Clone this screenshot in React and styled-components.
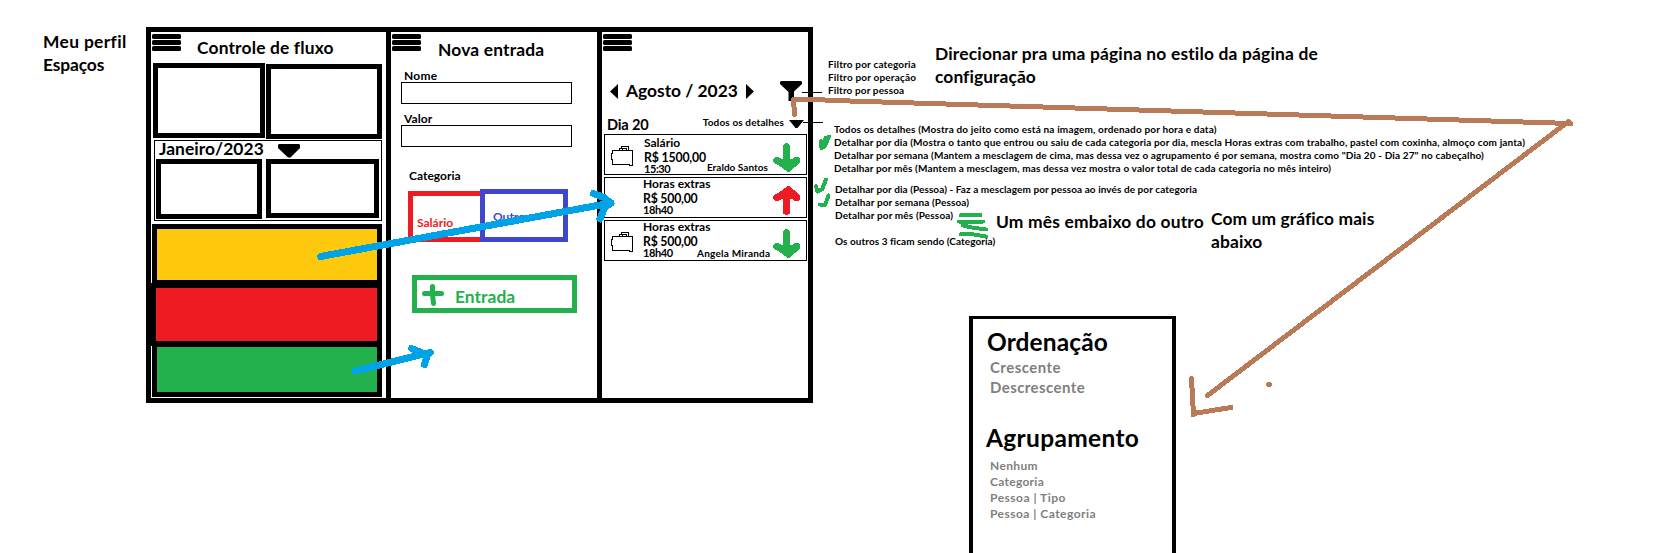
import React from "react";
import styled, { createGlobalStyle } from "styled-components";

const GlobalStyle = createGlobalStyle`
  * { box-sizing: border-box; }
  body {
    margin: 0;
    background: #fff;
    color: #000;
    font-family: Lato, "Liberation Sans", sans-serif;
    font-weight: 700;
  }
`;

const Board = styled.main`
  position: relative;
  width: 1672px;
  height: 553px;
  padding: 27px 0 0 146px;
  overflow: hidden;
`;

/* ---- text ---- */

const sizes = {
  title: { font: 17.4, line: 21 },
  day: { font: 14.6, line: 17 },
  field: { font: 12, line: 15 },
  amount: { font: 12.3, line: 13 },
  time: { font: 11, line: 13 },
  small: { font: 10, line: 12 },
};

const Label = styled.span`
  display: block;
  flex: none;
  white-space: pre;
  color: ${(p) => p.$color || "inherit"};
  font-size: ${(p) => sizes[p.$size].font}px;
  line-height: ${(p) => sizes[p.$size].line}px;
  letter-spacing: ${(p) => p.$track || 0}px;
`;

/* ---- phone frames ---- */

const Frames = styled.section`
  display: flex;
  width: 667px;
  height: 376px;
  border: 5px solid #000;
`;

const Panel = styled.section`
  display: flex;
  flex-direction: column;
  flex: none;
  width: ${(p) => p.$width}px;
  & + & {
    border-left: 5px solid #000;
  }
`;

const PanelHeader = styled.header`
  display: flex;
  align-items: flex-start;
  gap: ${(p) => p.$gap || 0}px;
  height: ${(p) => p.$height}px;
  padding: 2px 0 0 1px;
`;

const PanelTitle = styled(Label)`
  margin-top: ${(p) => p.$drop}px;
`;

const MenuLines = styled.div`
  display: flex;
  flex-direction: column;
  gap: 1px;
  width: 29px;
`;

const MenuLine = styled.i`
  height: 5px;
  border-radius: 1.5px;
  background: #000;
`;

/* ---- cash flow panel ---- */

const BoxRow = styled.div`
  display: flex;
  align-items: flex-start;
  gap: ${(p) => p.$gap}px;
  padding-left: ${(p) => p.$inset}px;
`;

const Box = styled.div`
  width: ${(p) => p.$width}px;
  height: ${(p) => p.$height}px;
  margin-top: ${(p) => p.$drop || 0}px;
  border: 5px solid #000;
`;

const MonthGroup = styled.div`
  width: 228px;
  height: 81px;
  margin: 1px 0 0 3px;
  border: 1px solid #000;
`;

const MonthPicker = styled.div`
  display: flex;
  align-items: flex-start;
  gap: 14px;
  height: 18px;
  padding-left: 4px;
  ${Label} {
    margin-top: -3px;
  }
  svg {
    margin-top: 3px;
  }
`;

const Bars = styled.div`
  display: flex;
  flex-direction: column;
  align-items: flex-end;
  width: 231px;
  margin-top: 3px;
`;

const Bar = styled.div`
  width: ${(p) => p.$width}px;
  height: ${(p) => p.$height}px;
  border: 5px solid #000;
  border-top-width: ${(p) => p.$top}px;
  border-bottom-width: ${(p) => p.$bottom}px;
  background: ${(p) => p.$fill};
`;

/* ---- new entry panel ---- */

const Field = styled.div`
  margin: 0 0 7px 10px;
  ${Label} {
    margin: 0 0 -1px 3px;
  }
`;

const FieldInput = styled.div`
  width: 171px;
  height: 22px;
  border: 1px solid #000;
`;

const CategoryLabel = styled(Label)`
  margin: 14px 0 6px 18px;
`;

const Categories = styled.div`
  display: flex;
  align-items: flex-end;
  padding-left: 17px;
`;

const Category = styled.div`
  width: ${(p) => p.$width}px;
  height: ${(p) => p.$height}px;
  padding: ${(p) => p.$pad};
  border: 5px solid ${(p) => p.$color};
  ${(p) => p.$open && "border-right: 0;"}
`;

const EntryButton = styled.div`
  display: flex;
  align-items: flex-start;
  gap: 11px;
  width: 165px;
  height: 38px;
  margin: 33px 0 0 21px;
  padding: 4px 5px;
  border: 5px solid #22b14c;
  ${Label} {
    margin-top: 2px;
  }
`;

/* ---- statement panel ---- */

const MonthNav = styled.div`
  display: flex;
  align-items: flex-start;
  height: 21px;
  padding-left: 8px;
`;

const Arrow = styled.svg`
  flex: none;
  margin: 4px ${(p) => p.$gap || 0}px 0 8px;
  &:first-child {
    margin-left: 0;
  }
`;

const Funnel = styled.svg`
  margin: 1px 0 0 26px;
`;

const DayRow = styled.div`
  display: flex;
  align-items: flex-start;
  width: 202px;
  height: 33px;
  padding: 15px 0 0 5px;
  svg {
    margin: 4px 0 0 5px;
  }
`;

const DetailLabel = styled(Label)`
  margin-left: auto;
`;

const Cards = styled.div`
  display: flex;
  flex-direction: column;
  gap: 2px;
  padding-left: 2px;
`;

const Card = styled.article`
  display: flex;
  align-items: flex-start;
  width: 203px;
  height: 41px;
  border: 1px solid #000;
`;

const CardIcon = styled.div`
  flex: none;
  width: ${(p) => p.$width}px;
  padding: 11px 0 0 6px;
`;

const CardLines = styled.div`
  flex: none;
  width: 54px;
  margin-top: ${(p) => p.$shift}px;
`;

const Amount = styled(Label)`
  margin: 1px 0 -2px;
`;

const Person = styled(Label)`
  margin: 26px ${(p) => p.$gap}px 0 auto;
`;

const Direction = styled.svg`
  flex: none;
  margin: ${(p) => p.$drop}px 5px 0 0;
  &:nth-child(3) {
    margin-left: auto;
  }
`;

/* ---- free notes on the board ---- */

const Note = styled.div`
  position: absolute;
  left: ${(p) => p.$x}px;
  top: ${(p) => p.$y}px;
  ${Label} {
    line-height: ${(p) => p.$line}px;
  }
`;

const OptionsSheet = styled.section`
  position: absolute;
  left: 969px;
  top: 316px;
  width: 207px;
  height: 300px;
  padding: 8px 0 0 13px;
  border: 4px solid #000;
  border-top-width: 3px;
`;

const SheetHeading = styled.h2`
  margin: ${(p) => p.$top || 0}px 0 0 ${(p) => p.$indent || 0}px;
  font-size: 24.5px;
  line-height: 29px;
  letter-spacing: ${(p) => p.$track}px;
`;

const OptionList = styled.ul`
  margin: ${(p) => p.$top}px 0 0;
  padding: 0 0 0 4px;
  list-style: none;
  color: #7f7f7f;
  font-size: ${(p) => p.$font}px;
  line-height: ${(p) => p.$line}px;
`;

const Option = styled.li`
  letter-spacing: ${(p) => p.$track}px;
`;

const Strokes = styled.svg`
  position: absolute;
  left: 0;
  top: 0;
  pointer-events: none;
`;

const Hamburger = () => (
  <MenuLines>
    <MenuLine />
    <MenuLine />
    <MenuLine />
  </MenuLines>
);

const Suitcase = () => (
  <svg width="24" height="21" viewBox="0 0 24 21" fill="none" stroke="#000" shapeRendering="crispEdges" display="block">
    <path d="M1.5 4.5H21.5V19.5H18.5V18.5H1.5V13.5H.5V7.5H1.5Z" />
    <path d="M8.5 4.5V2.5H10.5V.5H17.5V4.5M11.5 4.5V2.5H15.5V4.5" />
  </svg>
);

const FlowArrow = ({ up }) => (
  <Direction $drop={up ? 7 : 8} width="28" height="30" viewBox="0 0 28 30" shapeRendering="crispEdges">
    <g
      transform={up ? "matrix(1 0 0 -1 0 30)" : undefined}
      fill="none"
      stroke={up ? "#ed1c24" : "#22b14c"}
      strokeWidth="7.5"
      strokeLinecap="round"
      strokeLinejoin="round"
    >
      <path d="M13.5 4V23M4 17.5L10 20.5L15.5 25L23.5 17.5M9 20H19" />
    </g>
  </Direction>
);

const entries = [
  { name: "Salário", amount: "R$ 1500,00", amountTrack: -0.17, time: "15:30", person: "Eraldo Santos", personTrack: 0.04, personGap: 5, shift: 0, icon: true, indent: 39 },
  { name: "Horas extras", amount: "R$ 500,00", amountTrack: -0.23, time: "18h40", shift: -2, indent: 38, up: true },
  { name: "Horas extras", amount: "R$ 500,00", amountTrack: -0.23, time: "18h40", person: "Angela Miranda", personTrack: 0.22, personGap: 3, shift: -2, icon: true, indent: 38 },
];

export default function App() {
  return (
    <>
      <GlobalStyle />
      <Board>
        <Frames>
          <Panel $width={235}>
            <PanelHeader $height={31} $gap={16}>
              <Hamburger />
              <PanelTitle $size="title" $track={0.16} $drop={3}>Controle de fluxo</PanelTitle>
            </PanelHeader>
            <BoxRow $inset={2} $gap={1}>
              <Box $width={112} $height={75} />
              <Box $width={116} $height={75} $drop={1} />
            </BoxRow>
            <MonthGroup>
              <MonthPicker>
                <Label $size="title" $track={0.05}>Janeiro/2023</Label>
                <svg width="22" height="14" viewBox="0 0 22 14">
                  <path d="M1 0H21L22 1V4L12.5 13.5H10L0 4V1Z" />
                </svg>
              </MonthPicker>
              <BoxRow $inset={1} $gap={4}>
                <Box $width={106} $height={60} />
                <Box $width={113} $height={59} />
              </BoxRow>
            </MonthGroup>
            <Bars>
              <Bar $width={230} $height={59} $top={5} $bottom={3} $fill="#ffc90e" />
              <Bar $width={231} $height={63} $top={5} $bottom={5} $fill="#ed1c24" />
              <Bar $width={230} $height={51} $top={1} $bottom={5} $fill="#22b14c" />
            </Bars>
          </Panel>

          <Panel $width={211}>
            <PanelHeader $height={36} $gap={17}>
              <Hamburger />
              <PanelTitle $size="title" $track={0.18} $drop={5}>Nova entrada</PanelTitle>
            </PanelHeader>
            <Field>
              <Label $size="field" $track={0.27}>Nome</Label>
              <FieldInput />
            </Field>
            <Field>
              <Label $size="field" $track={0.12}>Valor</Label>
              <FieldInput />
            </Field>
            <CategoryLabel $size="field" $track={0.02}>Categoria</CategoryLabel>
            <Categories>
              <Category $width={72} $height={51} $pad="19px 0 0 4px" $color="#ed1c24" $open>
                <Label $size="field" $color="#ed1c24">Salário</Label>
              </Category>
              <Category $width={88} $height={53} $pad="15px 0 0 8px" $color="#3f48cc">
                <Label $size="field" $color="#3f48cc">Outros</Label>
              </Category>
            </Categories>
            <EntryButton>
              <svg width="22" height="22" viewBox="0 0 22 22" fill="none" stroke="#22b14c" strokeWidth="5" strokeLinecap="round">
                <path d="M10.5 2.5V10L11.500 19.5M2.5 9.5H19.5" />
              </svg>
              <Label $size="title" $color="#22b14c" $track={0.05}>Entrada</Label>
            </EntryButton>
          </Panel>

          <Panel $width={211}>
            <PanelHeader $height={48}>
              <Hamburger />
            </PanelHeader>
            <MonthNav>
              <Arrow $gap={8} width="8" height="15" viewBox="0 0 8 15">
                <path d="M8 0V15L0 7.5Z" />
              </Arrow>
              <Label $size="title" $track={-0.02}>Agosto / 2023</Label>
              <Arrow width="8" height="15" viewBox="0 0 8 15">
                <path d="M0 0V15L8 7.5Z" />
              </Arrow>
              <Funnel width="22" height="20" viewBox="0 0 22 20">
                <path d="M1 0H21L22 1V3L14 10.5V20H8.5V11L0 3V1Z" />
              </Funnel>
            </MonthNav>
            <DayRow>
              <Label $size="day" $track={-0.17}>Dia 20</Label>
              <DetailLabel $size="small" $track={0.13}>Todos os detalhes</DetailLabel>
              <svg width="15" height="9" viewBox="0 0 15 9">
                <path d="M0 0H15L8.5 8H6.5Z" />
              </svg>
            </DayRow>
            <Cards>
              {entries.map((entry, i) => (
                <Card key={i}>
                  <CardIcon $width={entry.indent}>{entry.icon && <Suitcase />}</CardIcon>
                  <CardLines $shift={entry.shift}>
                    <Label $size="field">{entry.name}</Label>
                    <Amount $size="amount" $track={entry.amountTrack}>{entry.amount}</Amount>
                    <Label $size="time" $track={-0.42}>{entry.time}</Label>
                  </CardLines>
                  {entry.person && (
                    <Person $size="small" $gap={entry.personGap} $track={entry.personTrack}>
                      {entry.person}
                    </Person>
                  )}
                  <FlowArrow up={entry.up} />
                </Card>
              ))}
            </Cards>
          </Panel>
        </Frames>

        <Note $x={43} $y={30} $line={23}>
          <Label $size="title" $track={0.35}>Meu perfil</Label>
          <Label $size="title" $track={-0.12}>Espaços</Label>
        </Note>

        <Note $x={828} $y={58} $line={13}>
          <Label $size="small" $track={0.17}>Filtro por categoria</Label>
          <Label $size="small" $track={0.18}>Filtro por operação</Label>
          <Label $size="small" $track={0.12}>Filtro por pessoa</Label>
        </Note>

        <Note $x={935} $y={42} $line={23}>
          <Label $size="title" $track={0.18}>Direcionar pra uma página no estilo da página de</Label>
          <Label $size="title" $track={0.08}>configuração</Label>
        </Note>

        <Note $x={834} $y={123} $line={13}>
          <Label $size="small" $track={0.155}>Todos os detalhes (Mostra do jeito como está na imagem, ordenado por hora e data)</Label>
          <Label $size="small" $track={0.137}>Detalhar por dia (Mostra o tanto que entrou ou saiu de cada categoria por dia, mescla Horas extras com trabalho, pastel com coxinha, almoço com janta)</Label>
          <Label $size="small" $track={0.13}>Detalhar por semana (Mantem a mesclagem de cima, mas dessa vez o agrupamento é por semana, mostra como "Dia 20 - Dia 27" no cabeçalho)</Label>
          <Label $size="small" $track={0.14}>Detalhar por mês (Mantem a mesclagem, mas dessa vez mostra o valor total de cada categoria no mês inteiro)</Label>
        </Note>

        <Note $x={835} $y={183} $line={13}>
          <Label $size="small" $track={0.075}>Detalhar por dia (Pessoa) - Faz a mesclagem por pessoa ao invés de por categoria</Label>
          <Label $size="small" $track={0.125}>Detalhar por semana (Pessoa)</Label>
          <Label $size="small" $track={0.13}>Detalhar por mês (Pessoa)</Label>
        </Note>

        <Note $x={835} $y={235} $line={13}>
          <Label $size="small" $track={0.055}>Os outros 3 ficam sendo (Categoria)</Label>
        </Note>

        <Note $x={996} $y={210} $line={23}>
          <Label $size="title" $track={0.19}>Um mês embaixo do outro</Label>
        </Note>

        <Note $x={1211} $y={207} $line={23}>
          <Label $size="title" $track={0.1}>Com um gráfico mais</Label>
          <Label $size="title" $track={0.15}>abaixo</Label>
        </Note>

        <OptionsSheet>
          <SheetHeading $indent={1} $track={0.1}>Ordenação</SheetHeading>
          <OptionList $top={1} $font={15} $line={20}>
            <Option $track={0.46}>Crescente</Option>
            <Option $track={0.42}>Descrescente</Option>
          </OptionList>
          <SheetHeading $top={26} $track={0.33}>Agrupamento</SheetHeading>
          <OptionList $top={6} $font={12} $line={16}>
            <Option $track={0.36}>Nenhum</Option>
            <Option $track={0.28}>Categoria</Option>
            <Option $track={0.49}>Pessoa | Tipo</Option>
            <Option $track={0.47}>Pessoa | Categoria</Option>
          </OptionList>
        </OptionsSheet>

        <Strokes
          width="1672"
          height="553"
          viewBox="0 0 1672 553"
          fill="none"
          strokeLinecap="round"
          strokeLinejoin="round"
          shapeRendering="crispEdges"
        >
          <path d="M802 92.5H822M803 122.5H823" stroke="#000" strokeLinecap="butt" />
          <g stroke="#00a2e8" strokeWidth="7">
            <path d="M320.5 256.5L611 203M593.5 193.5L604 197.5L610.5 203L604.5 208L600 219" />
            <path d="M355 371L430 352.5M411.5 348.5L424 353.5M430.5 352.5L427 356L424.5 364.5" />
          </g>
          <g stroke="#b97a57" strokeWidth="5">
            <path d="M794.5 114.5L793.5 99.5H812L850 101L1571 123.5L1568.5 121.5L1207.5 395.5" />
            <path d="M1191.5 378.5L1193.5 415V413.5L1231 407.5" />
            <path d="M1268.5 384.5H1269.5" />
          </g>
          <g stroke="#22b14c" strokeWidth="4">
            <path d="M821 141L821.5 148L825 146L829 136.5M825.5 138L824 142" />
            <path d="M816 186L817.5 191.500L822 189.500L826 179.5" />
            <path d="M820 204.500L825 205L828.5 195.5" />
            <path d="M961 215H980.5M959 221.500H983M963 225.500L972 227.500L986 229.500M961 234L971 234L986 236.500" />
          </g>
        </Strokes>
      </Board>
    </>
  );
}
